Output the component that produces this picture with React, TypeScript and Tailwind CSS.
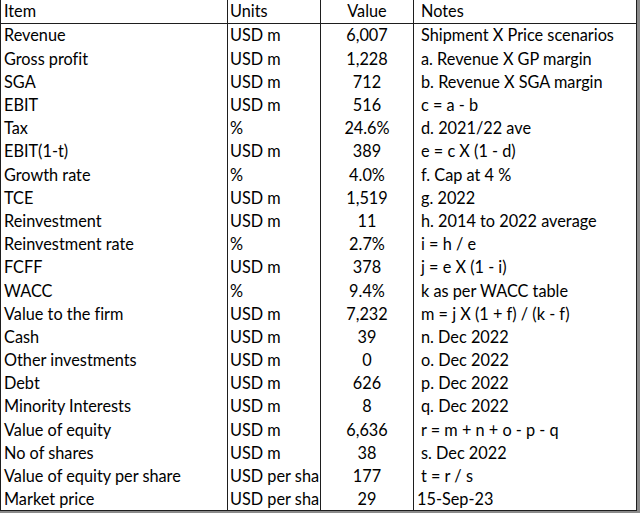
const rows: [string, string, string, string][] = [
  ['Revenue', 'USD m', '6,007', 'Shipment X Price scenarios'],
  ['Gross profit', 'USD m', '1,228', 'a. Revenue X GP margin'],
  ['SGA', 'USD m', '712', 'b. Revenue X SGA margin'],
  ['EBIT', 'USD m', '516', 'c = a - b'],
  ['Tax', '%', '24.6%', 'd. 2021/22 ave'],
  ['EBIT(1-t)', 'USD m', '389', 'e = c X (1 - d)'],
  ['Growth rate', '%', '4.0%', 'f. Cap at 4 %'],
  ['TCE', 'USD m', '1,519', 'g. 2022'],
  ['Reinvestment', 'USD m', '11', 'h. 2014 to 2022 average'],
  ['Reinvestment rate', '%', '2.7%', 'i = h / e'],
  ['FCFF', 'USD m', '378', 'j = e X (1 - i)'],
  ['WACC', '%', '9.4%', 'k as per WACC table'],
  ['Value to the firm', 'USD m', '7,232', 'm = j X (1 + f) / (k - f)'],
  ['Cash', 'USD m', '39', 'n. Dec 2022'],
  ['Other investments', 'USD m', '0', 'o. Dec 2022'],
  ['Debt', 'USD m', '626', 'p. Dec 2022'],
  ['Minority Interests', 'USD m', '8', 'q. Dec 2022'],
  ['Value of equity', 'USD m', '6,636', 'r = m + n + o - p - q'],
  ['No of shares', 'USD m', '38', 's. Dec 2022'],
  ['Value of equity per share', 'USD per sha', '177', 't = r / s'],
  ['Market price', 'USD per sha', '29', '15-Sep-23'],
];

const cols = 'grid grid-cols-[226px_93px_93px_1fr]';

export default function App() {
  return (
    <div className="w-[640px] h-[513px] bg-white">
      <div className="w-[640px] h-[513px] border-r-[3px] border-b-[2px] border-[#8a8a8a]">
        <div
          className="h-[511px] border border-t-0 border-[#1e1e1e] text-black text-[16.3px] leading-none [font-variant-ligatures:none]"
          style={{ fontFamily: 'Lato, "Open Sans", sans-serif' }}
        >
          <div className={`${cols} h-[24px] border-b border-[#1e1e1e]`}>
            <div className="flex items-center pl-[3px]">Item</div>
            <div className="flex items-center pl-[2px] border-l border-[#1e1e1e]">Units</div>
            <div className="flex items-center justify-center border-l border-[#1e1e1e]">Value</div>
            <div className="flex items-center pl-[7px] border-l border-[#1e1e1e]">Notes</div>
          </div>
          {rows.map(([item, units, value, note], i) => (
            <div key={item} className={`${cols} h-[23.19px]`}>
              <div className="flex items-center pl-[3px] whitespace-nowrap">{item}</div>
              <div className="flex items-center pl-[2px] border-l border-[#1e1e1e] whitespace-nowrap">
                {units}
              </div>
              <div className="flex items-center justify-center border-l border-[#1e1e1e]">{value}</div>
              <div
                className={`flex items-center border-l border-[#1e1e1e] whitespace-nowrap ${
                  i === rows.length - 1 ? 'pl-[3px]' : 'pl-[7px]'
                }`}
              >
                {note}
              </div>
            </div>
          ))}
        </div>
      </div>
    </div>
  );
}
